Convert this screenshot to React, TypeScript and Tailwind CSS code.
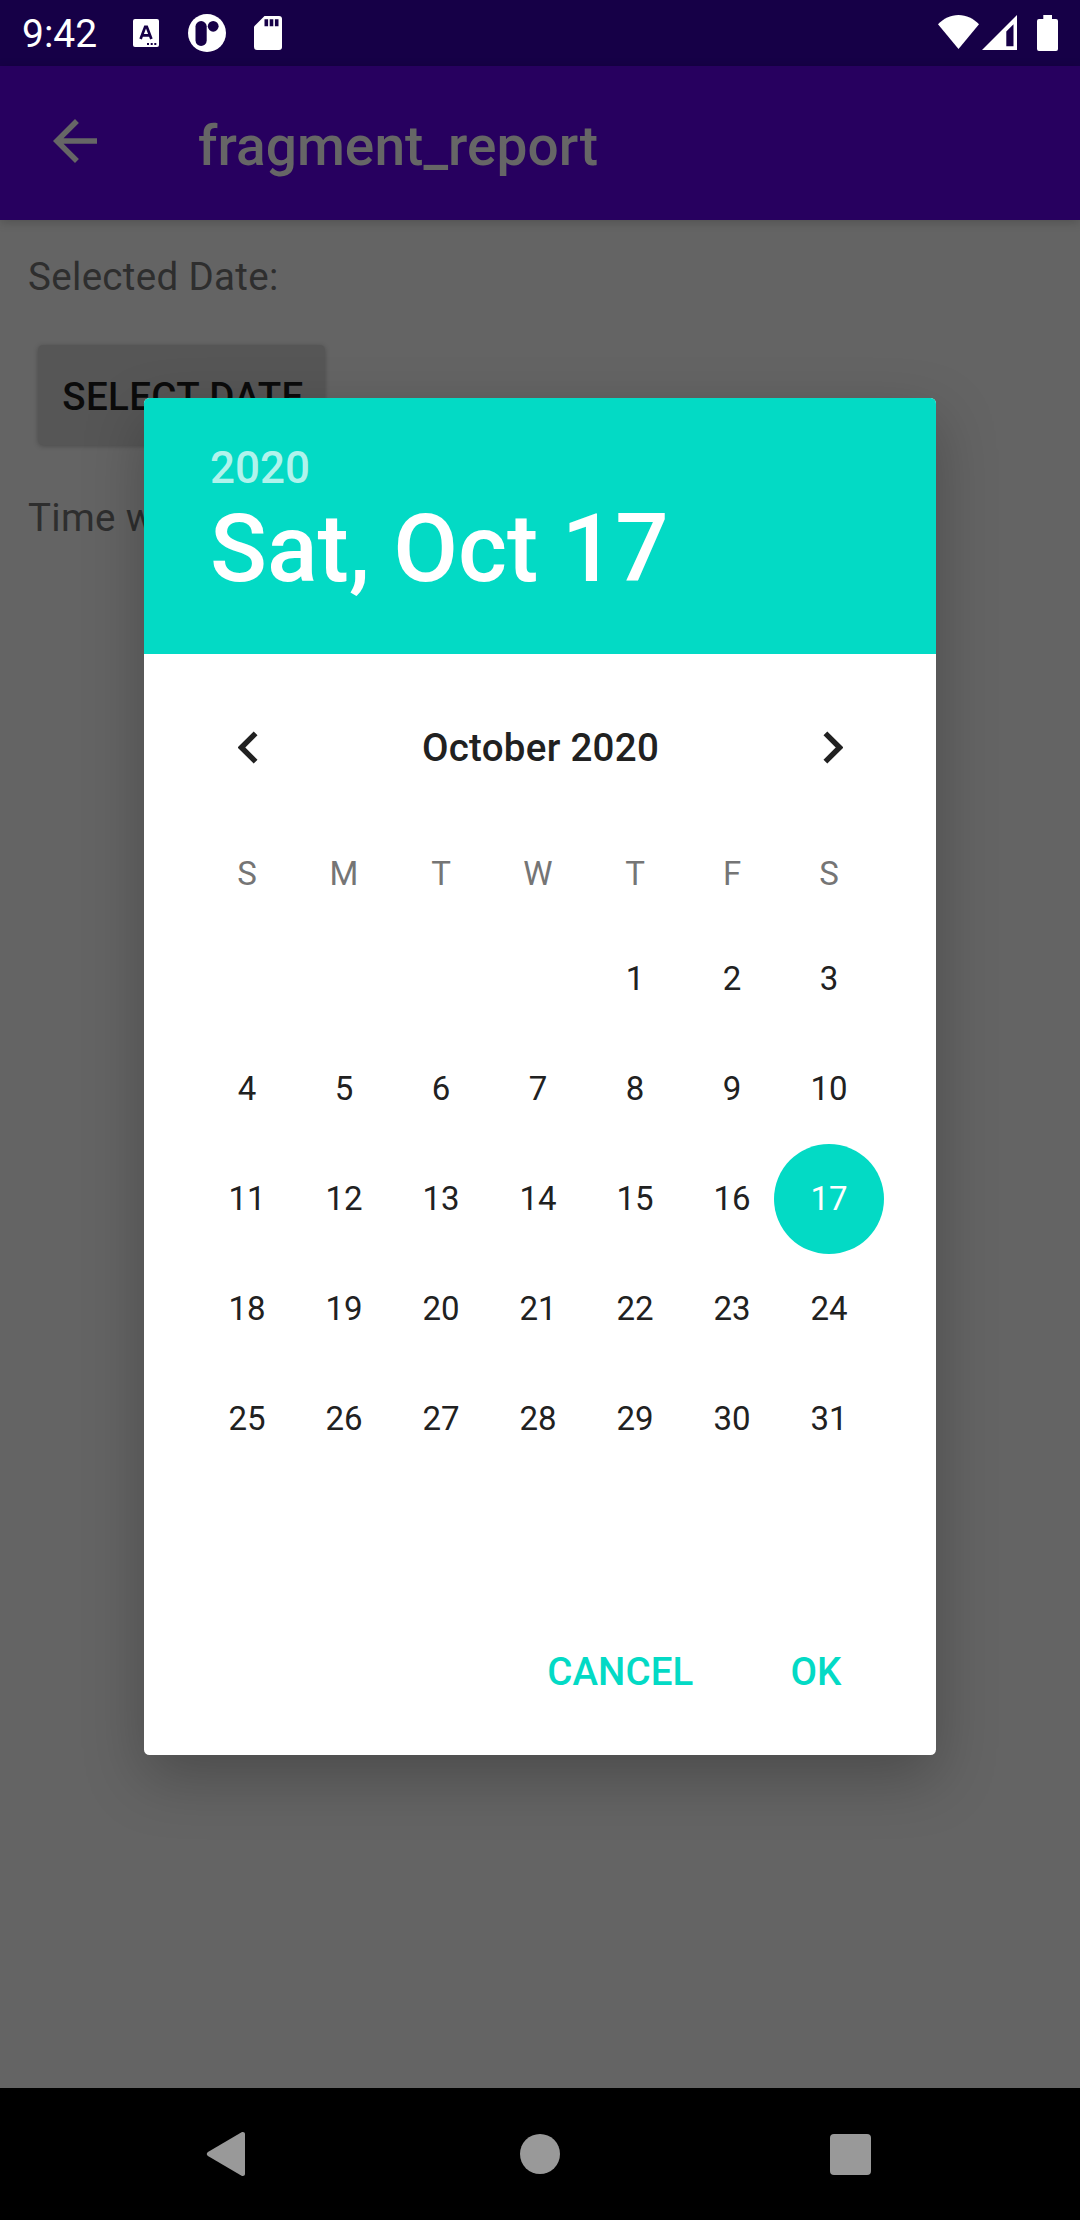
const WEEKDAYS = ["S", "M", "T", "W", "T", "F", "S"];
const LEADING_BLANKS = 4;
const DAYS = Array.from({ length: 31 }, (_, i) => i + 1);
const SELECTED = 17;

function StatusBar() {
  return (
    <div className="flex h-[66px] w-full items-center bg-[#160047] text-white">
      <span className="ml-[22px] w-[111px] pt-[2px] text-[39px] leading-[66px]">9:42</span>
      <svg className="h-[28px] w-[26px]" viewBox="0 0 26 28">
        <rect width="26" height="28" rx="2" fill="#fff" />
        <path d="M7.6 20 L12.2 7.8 H13.8 L18.4 20 M9.2 16.4 H16.8" fill="none" stroke="#160047" strokeWidth="2.7" />
        <path d="M14 24h2v2h-2z M17.7 24h2v2h-2z M21.3 24h2v2h-2z" fill="#160047" />
      </svg>
      <svg className="ml-[29px] h-[38px] w-[38px]" viewBox="0 0 38 38">
        <circle cx="19" cy="19" r="19" fill="#fff" />
        <rect x="7.5" y="7" width="11.2" height="25" rx="5.6" fill="#160047" />
        <circle cx="25.2" cy="12.3" r="5.4" fill="#160047" />
      </svg>
      <svg className="ml-[28px] h-[34px] w-[28px]" viewBox="0 0 28 34">
        <path d="M10.5 0H25a3 3 0 0 1 3 3V31a3 3 0 0 1-3 3H3a3 3 0 0 1-3-3V10.500z" fill="#fff" />
        <path d="M10.500 3.300h3.600v7h-3.600z M15.700 3.300h3.600v7h-3.600z M20.900 3.300h3.600v7h-3.600z" fill="#160047" />
      </svg>
      <div className="ml-auto flex items-start">
        <svg className="mr-[3px] h-[34px] w-[41px]" viewBox="0 0 41 34">
          <path d="M0 9.300C5.500 3.600 12.500 0 20.500 0S35.500 3.600 41 9.300L20.500 34z" fill="#fff" />
        </svg>
        <svg className="mr-[20px] h-[35px] w-[35px]" viewBox="0 0 35 35">
          <path fillRule="evenodd" d="M35 0V35H0z M31.500 9.300L24.300 16.500V31.200H31.500z" fill="#fff" />
        </svg>
        <svg className="mr-[22px] h-[36px] w-[21px]" viewBox="0 0 21 36">
          <path d="M6.300 0H15V4H19a2 2 0 0 1 2 2V34a2 2 0 0 1-2 2H2a2 2 0 0 1-2-2V6a2 2 0 0 1 2-2H6.300z" fill="#fff" />
        </svg>
      </div>
    </div>
  );
}

function AppBar() {
  return (
    <div className="flex h-[154px] w-full items-center bg-[#27005f] text-[#666666] shadow-[0_2px_10px_rgba(0,0,0,0.2)]">
      <svg className="mb-[4px] ml-[42px] size-[66px]" viewBox="0 0 24 24" fill="currentColor">
        <path d="M20 11H7.830l5.590-5.590L12 4l-8 8 8 8 1.410-1.410L7.830 13H20v-2z" />
      </svg>
      <h1 className="ml-[90px] pt-[6px] text-[55px] leading-[66px] font-medium tracking-[0.05px]">fragment_report</h1>
    </div>
  );
}

function Page() {
  return (
    <div className="flex flex-1 flex-col items-start text-[38.500px] leading-[52px] tracking-[0.33px] text-[#2e2e2e]">
      <p className="mt-[31px] ml-[28px]">Selected Date:</p>
      <button className="mt-[42px] ml-[38px] h-[100px] w-[287px] rounded-[5px] bg-[#565656] pt-[3px] pl-[3px] font-medium tracking-[0.36px] whitespace-nowrap text-[#0b0b0b] shadow-[0_1px_5px_rgba(0,0,0,0.25)]">
        SELECT DATE
      </button>
      <p className="mt-[47px] ml-[28px]">Time w</p>
    </div>
  );
}

function Chevron({ flip = false }: { flip?: boolean }) {
  return (
    <svg className={flip ? "h-[33px] w-[20px] -scale-x-100" : "h-[33px] w-[20px]"} viewBox="0 0 20 33">
      <path d="M17.600 2.300L3.400 16.500L17.600 30.700" fill="none" stroke="#212121" strokeWidth="5.400" />
    </svg>
  );
}

function DatePicker() {
  return (
    <div className="absolute top-[398px] left-[144px] flex h-[1357px] w-[792px] flex-col rounded-[5.500px] bg-white shadow-[0_22px_60px_rgba(0,0,0,0.25)]">
      <div className="h-[256px] rounded-t-[5.500px] bg-[#03dac5] pt-[44px] pl-[66px] font-medium text-white">
        <div className="text-[44px] leading-[52px] text-white/70">2020</div>
        <div className="text-[94px] leading-[110px]">Sat, Oct 17</div>
      </div>

      <div className="mt-[60px] flex h-[66px] items-center justify-between pr-[93px] pl-[94px] text-[#212121]">
        <Chevron />
        <span className="pt-px text-[38.500px] leading-[52px] font-medium tracking-[0.28px]">October 2020</span>
        <Chevron flip />
      </div>

      <div className="mt-[61px] grid h-[66px] grid-cols-7 pr-[58.500px] pl-[54.500px] text-center text-[33px] leading-[66px] text-[#757575]">
        {WEEKDAYS.map((d, i) => (
          <span key={i}>{d}</span>
        ))}
      </div>

      <div className="mt-[17px] grid auto-rows-[110px] grid-cols-7 pr-[58.500px] pl-[54.500px] text-[33px] text-[#212121]">
        {Array.from({ length: LEADING_BLANKS }, (_, i) => (
          <span key={`blank-${i}`} />
        ))}
        {DAYS.map((d) => (
          <div key={d} className="flex items-center justify-center">
            {d === SELECTED ? (
              <span className="-mx-2 flex size-[110px] shrink-0 items-center justify-center rounded-full bg-[#03dac5] text-white">
                {d}
              </span>
            ) : (
              <span>{d}</span>
            )}
          </div>
        ))}
      </div>

      <div className="mt-auto mb-[50px] flex h-[66px] items-center justify-end gap-[97px] pr-[94.500px] text-[38.500px] leading-[52px] font-medium tracking-[0.1px] text-[#03dac5]">
        <button>CANCEL</button>
        <button>OK</button>
      </div>
    </div>
  );
}

function NavBar() {
  return (
    <div className="flex h-[132px] w-full items-center bg-black text-[#999999]">
      <svg className="ml-[206px] h-[46px] w-[39px]" viewBox="0 0 40 46" fill="currentColor">
        <path d="M36.500 .8C38 0 40 .6 40 2.500V43.500C40 45.400 38 46 36.500 45.200L2 25C.4 24 .4 22 2 21z" />
      </svg>
      <span className="ml-[275px] size-[40px] rounded-full bg-[#999999]" />
      <span className="ml-[270px] size-[41px] rounded-[4px] bg-[#999999]" />
    </div>
  );
}

export default function App() {
  return (
    <div className="relative flex h-[2220px] w-[1080px] flex-col overflow-hidden bg-[#646464] font-[Roboto,sans-serif]">
      <StatusBar />
      <AppBar />
      <Page />
      <NavBar />
      <DatePicker />
    </div>
  );
}
